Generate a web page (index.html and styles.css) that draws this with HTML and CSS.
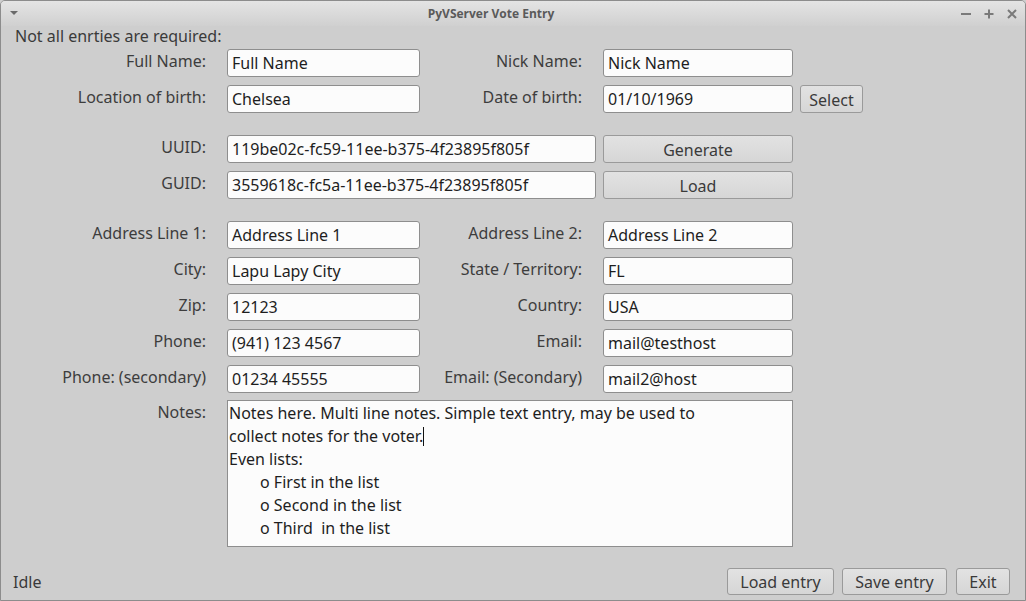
FILE: index.html
```html
<!DOCTYPE html>
<html>
<head>
<meta charset="utf-8">
<title>PyVServer Vote Entry</title>
<link rel="stylesheet" href="styles.css">
</head>
<body>
<div class="window">
  <div class="titlebar">
    <span class="menu-arrow"></span>
    <span class="title">PyVServer Vote Entry</span>
    <span class="controls">
      <svg width="12" height="12" viewBox="0 0 12 12"><path d="M1 6h10" stroke="#7a7a7a" stroke-width="2"/></svg>
      <svg width="12" height="12" viewBox="0 0 12 12"><path d="M1.5 6h9M6 1.5v9" stroke="#7a7a7a" stroke-width="2"/></svg>
      <svg width="12" height="12" viewBox="0 0 12 12"><path d="M2 2l8 8M10 2l-8 8" stroke="#7a7a7a" stroke-width="2"/></svg>
    </span>
  </div>
  <div class="content">
    <div class="note">Not all enrties are required:</div>

    <div class="form">
      <label class="lbl">Full Name:</label>
      <div class="field">Full Name</div>
      <label class="lbl">Nick Name:</label>
      <div class="field">Nick Name</div>
      <span></span>

      <label class="lbl">Location of birth:</label>
      <div class="field">Chelsea</div>
      <label class="lbl">Date of birth:</label>
      <div class="field">01/10/1969</div>
      <button class="btn">Select</button>
    </div>

    <div class="form section">
      <label class="lbl">UUID:</label>
      <div class="field wide">119be02c-fc59-11ee-b375-4f23895f805f</div>
      <button class="btn">Generate</button>
      <span></span>

      <label class="lbl">GUID:</label>
      <div class="field wide">3559618c-fc5a-11ee-b375-4f23895f805f</div>
      <button class="btn">Load</button>
      <span></span>
    </div>

    <div class="form section">
      <label class="lbl">Address Line 1:</label>
      <div class="field">Address Line 1</div>
      <label class="lbl">Address Line 2:</label>
      <div class="field">Address Line 2</div>
      <span></span>

      <label class="lbl">City:</label>
      <div class="field">Lapu Lapy City</div>
      <label class="lbl">State / Territory:</label>
      <div class="field">FL</div>
      <span></span>

      <label class="lbl">Zip:</label>
      <div class="field">12123</div>
      <label class="lbl">Country:</label>
      <div class="field">USA</div>
      <span></span>

      <label class="lbl">Phone:</label>
      <div class="field">(941) 123 4567</div>
      <label class="lbl">Email:</label>
      <div class="field">mail@testhost</div>
      <span></span>

      <label class="lbl">Phone: (secondary)</label>
      <div class="field">01234 45555</div>
      <label class="lbl">Email: (Secondary)</label>
      <div class="field">mail2@host</div>
      <span></span>
    </div>

    <div class="form notes-row">
      <label class="lbl top">Notes:</label>
      <div class="notes">
        <div>Notes here. Multi line notes. Simple text entry, may be used to</div>
        <div>collect notes for the voter.<span class="caret"></span></div>
        <div>Even lists:</div>
        <div class="item">o First in the list</div>
        <div class="item">o Second in the list</div>
        <div class="item">o Third&nbsp; in the list</div>
      </div>
    </div>
  </div>
  <div class="statusbar">
    <span class="status">Idle</span>
    <div class="actions">
      <button class="btn">Load entry</button>
      <button class="btn">Save entry</button>
      <button class="btn">Exit</button>
    </div>
  </div>
</div>
</body>
</html>
```

FILE: styles.css
```css
* { box-sizing: border-box; }
html, body { margin: 0; padding: 0; }
body {
  width: 1026px;
  height: 601px;
  background: #cecece;
  font-family: "Noto Sans", "Open Sans", sans-serif;
  font-size: 16px;
  color: #3a3a3a;
  overflow: hidden;
}
.window {
  width: 1026px;
  height: 601px;
  border: 1px solid #8c8c8c;
  border-radius: 5px 5px 0 0;
  background: #cecece;
  display: flex;
  flex-direction: column;
}
.titlebar {
  height: 25px;
  flex: none;
  display: flex;
  align-items: center;
  position: relative;
  background: linear-gradient(#e4e4e4, #d0d0d0);
  border-radius: 4px 4px 0 0;
  padding: 0 5px 0 9px;
}
.menu-arrow {
  width: 0;
  height: 0;
  border-left: 4px solid transparent;
  border-right: 4px solid transparent;
  border-top: 4px solid #6a6a6a;
  margin-top: -2px;
}
.title {
  flex: 1;
  text-align: center;
  font-family: "Open Sans", sans-serif;
  font-size: 12px;
  font-weight: bold;
  color: #5a5a5a;
  padding-left: 4px;
}
.controls {
  display: flex;
  gap: 11px;
  align-items: center;
  padding-right: 2px;
}
.controls svg { display: block; }
.content {
  flex: 1;
}
.note {
  padding-left: 14px;
  line-height: 20px;
  height: 23px;
}
.form {
  display: grid;
  grid-template-columns: 219px 193px 169px 190px 63px;
  grid-auto-rows: 28px;
  column-gap: 7px;
  row-gap: 8px;
}
.form.section { margin-top: 22px; }
.form.notes-row {
  margin-top: 7px;
  grid-template-rows: 147px;
}
.lbl {
  text-align: right;
  padding-right: 14px;
  align-self: center;
  padding-bottom: 5px;
  white-space: nowrap;
  color: #3d3d3d;
}
.lbl.top { align-self: start; padding-bottom: 0; padding-top: 1px; }
.field {
  background: #fcfcfc;
  border: 1px solid #8e8e8e;
  border-radius: 3px;
  padding: 1px 4px 0;
  line-height: 25px;
  color: #1e1e1e;
  white-space: nowrap;
  overflow: hidden;
}
.field.wide { grid-column: span 2; }
.btn {
  font-family: inherit;
  font-size: 16px;
  color: #3a3a3a;
  background: linear-gradient(#e2e2e2, #d6d6d6);
  border: 1px solid #9a9a9a;
  border-radius: 3px;
  padding: 1px 6px 0;
  height: 28px;
  line-height: 24px;
}
.notes {
  grid-column: 2 / span 3;
  background: #fcfcfc;
  border: 1px solid #8e8e8e;
  padding: 1px 2px 0 1px;
  color: #1e1e1e;
  line-height: 23px;
}
.notes .item { padding-left: 31px; }
.caret {
  display: inline-block;
  width: 1px;
  height: 19px;
  background: #111;
  vertical-align: -4px;
}
.statusbar {
  flex: none;
  display: flex;
  justify-content: space-between;
  align-items: center;
  padding: 1px 15px 3px 12px;
  height: 36px;
}
.status { padding-top: 1px; }
.actions { display: flex; gap: 8px; }
.actions .btn { height: 27px; }
.actions .btn:first-child { width: 107px; }
.actions .btn:nth-child(2) { width: 105px; }
.actions .btn:nth-child(3) { width: 54px; margin-left: 1px; }
```
